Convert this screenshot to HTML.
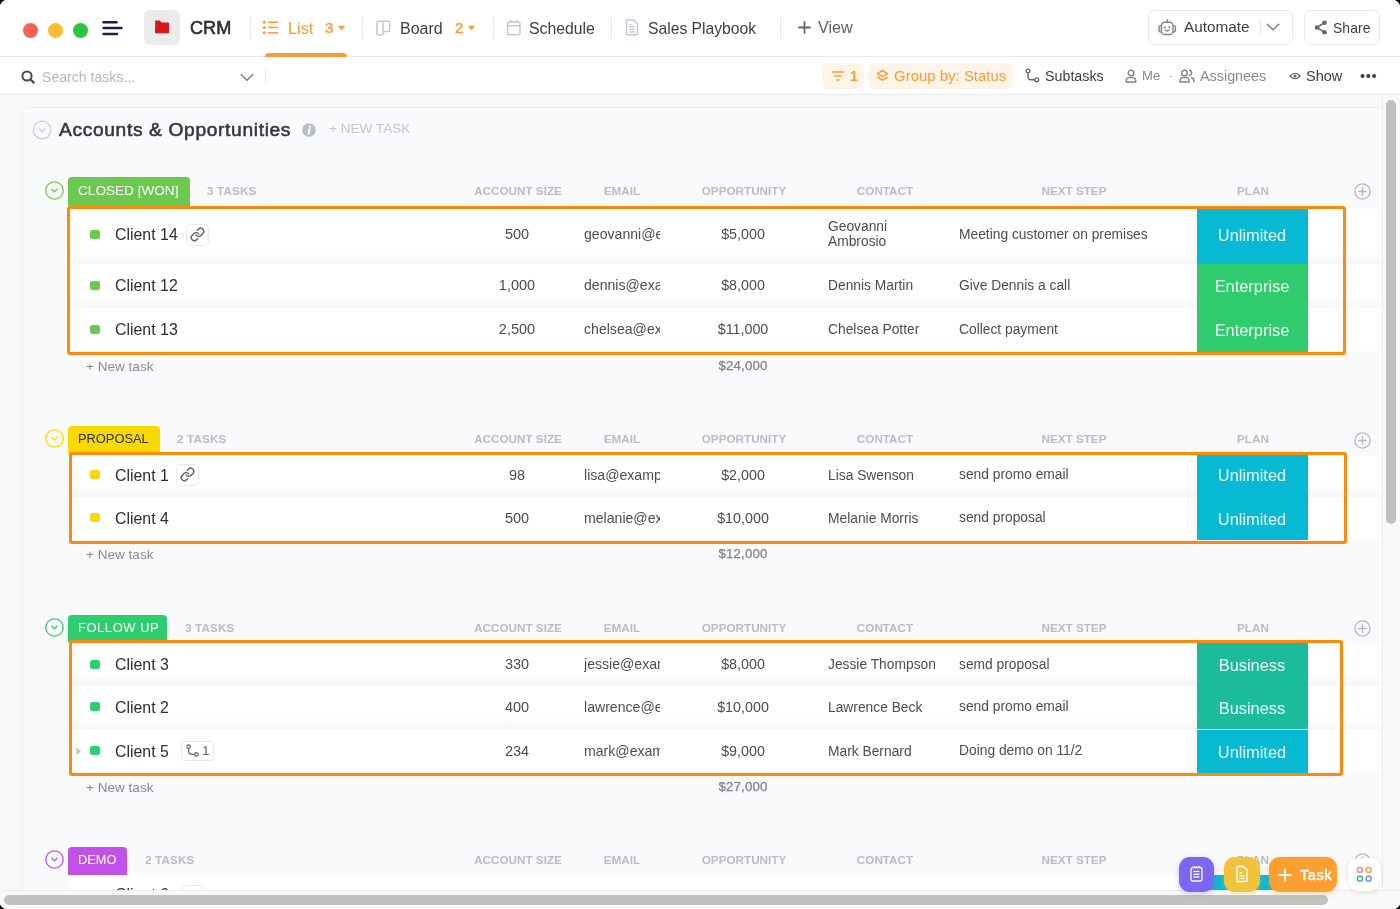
<!DOCTYPE html><html><head><meta charset="utf-8"><style>
html,body{margin:0;padding:0}
body{width:1400px;height:909px;overflow:hidden;background:#000;position:relative;font-family:"Liberation Sans", sans-serif}
#win{-webkit-font-smoothing:antialiased;position:absolute;left:0;top:0;width:1400px;height:909px;border-radius:7px;overflow:hidden;background:#fff}
.t{position:absolute;white-space:nowrap;will-change:transform}
.b{position:absolute}
</style></head><body><div id="win">
<div class="b" style="left:0px;top:95px;width:1400px;height:814px;background:#f8f8f9"></div>
<div class="b" style="left:22px;top:107px;width:1400px;height:850px;background:#f9fafb;border:1px solid #eeeff2;border-radius:7px"></div>
<div class="b" style="left:0px;top:0px;width:1400px;height:57px;background:#fff;border-bottom:1px solid #e8eaee;box-sizing:border-box"></div>
<div class="b" style="left:23.0px;top:22.5px;width:15px;height:15px;background:#fe5f57;border-radius:50%"></div>
<div class="b" style="left:48.0px;top:22.5px;width:15px;height:15px;background:#febc2e;border-radius:50%"></div>
<div class="b" style="left:73.0px;top:22.5px;width:15px;height:15px;background:#28c840;border-radius:50%"></div>
<svg class="b" style="left:101px;top:19px" width="24" height="18" viewBox="0 0 24 18"><g stroke="#1f2045" stroke-width="2.4" stroke-linecap="round"><line x1="2.5" y1="3.3" x2="15.5" y2="3.3"/><line x1="2.5" y1="9" x2="20.5" y2="9"/><line x1="2.5" y1="15" x2="16" y2="15"/></g></svg>
<div class="b" style="left:144px;top:10px;width:36px;height:35px;background:#ebebeb;border-radius:6px"></div>
<svg class="b" style="left:154px;top:20px" width="16" height="14" viewBox="0 0 16 14"><path d="M1.2 1.2 Q1.2 0.6 1.8 0.6 L5.8 0.6 L7.6 2.6 L14.2 2.6 Q15 2.6 15 3.4 L15 12.4 Q15 13.2 14.2 13.2 L1.8 13.2 Q1 13.2 1 12.4 Z" fill="#d6161c"/></svg>
<div class="t" style="left:189.5px;top:17.00px;font-size:18.1px;line-height:23px;color:#2b2e36;font-weight:normal;-webkit-text-stroke:0.55px #2b2e36">CRM</div>
<div class="b" style="left:250.0px;top:17px;width:1px;height:22px;background:#e6e8ec"></div>
<div class="b" style="left:362.0px;top:17px;width:1px;height:22px;background:#e6e8ec"></div>
<div class="b" style="left:492.7px;top:17px;width:1px;height:22px;background:#e6e8ec"></div>
<div class="b" style="left:610.9px;top:17px;width:1px;height:22px;background:#e6e8ec"></div>
<div class="b" style="left:779.5px;top:17px;width:1px;height:22px;background:#e6e8ec"></div>
<svg class="b" style="left:262px;top:20px" width="18" height="15" viewBox="0 0 18 15"><g fill="#fd9a34"><circle cx="2.3" cy="2.3" r="1.5"/><circle cx="2.3" cy="7.5" r="1.5"/><circle cx="2.3" cy="12.7" r="1.5"/></g><g stroke="#fd9a34" stroke-width="1.5" stroke-linecap="round"><line x1="6.5" y1="2.3" x2="15.5" y2="2.3"/><line x1="6.5" y1="7.5" x2="15.5" y2="7.5"/><line x1="6.5" y1="12.7" x2="15.5" y2="12.7"/></g></svg>
<div class="t" style="left:287.5px;top:18.00px;font-size:16.3px;line-height:20px;color:#fd9a34;font-weight:normal;">List</div>
<div class="t" style="left:324.5px;top:18.00px;font-size:15px;line-height:19px;color:#fd9a34;font-weight:normal;-webkit-text-stroke:0.4px #fd9a34">3</div>
<svg class="b" style="left:337px;top:25px" width="9" height="6" viewBox="0 0 9 6"><path d="M0.8 0.8 L8.2 0.8 L4.5 5.2 Z" fill="#fd9a34"/></svg>
<div class="b" style="left:264.7px;top:52.5px;width:82.3px;height:5px;background:#fd9a34;border-radius:4px 4px 0 0"></div>
<svg class="b" style="left:376px;top:20px" width="15" height="16" viewBox="0 0 15 16"><path d="M7 1.2 H2.6 Q1 1.2 1 2.8 V13.4 Q1 15 2.6 15 H5.4 Q7 15 7 13.4 V1.2 H12 Q13.6 1.2 13.6 2.8 V9.9 Q13.6 11.5 12 11.5 H7" fill="none" stroke="#c3c7cf" stroke-width="1.5" stroke-linejoin="round"/></svg>
<div class="t" style="left:399.8px;top:19.00px;font-size:16px;line-height:20px;color:#3a3d44;font-weight:normal;">Board</div>
<div class="t" style="left:454.8px;top:18.00px;font-size:15px;line-height:19px;color:#fd9a34;font-weight:normal;-webkit-text-stroke:0.4px #fd9a34">2</div>
<svg class="b" style="left:466.5px;top:25px" width="9" height="6" viewBox="0 0 9 6"><path d="M0.8 0.8 L8.2 0.8 L4.5 5.2 Z" fill="#fd9a34"/></svg>
<svg class="b" style="left:506px;top:19px" width="16" height="17" viewBox="0 0 16 17"><g fill="none" stroke="#c3c7cf" stroke-width="1.5" stroke-linejoin="round"><rect x="1.5" y="3" width="12.5" height="12.8" rx="2"/><line x1="1.5" y1="6.8" x2="14" y2="6.8"/><line x1="4.6" y1="1" x2="4.6" y2="3.5"/><line x1="10.9" y1="1" x2="10.9" y2="3.5"/></g></svg>
<div class="t" style="left:529.3px;top:19.00px;font-size:15.8px;line-height:20px;color:#3a3d44;font-weight:normal;">Schedule</div>
<svg class="b" style="left:625px;top:19px" width="14" height="17" viewBox="0 0 14 17"><g fill="none" stroke="#c3c7cf" stroke-width="1.4" stroke-linejoin="round"><path d="M1.5 2.2 Q1.5 1 2.7 1 H8.5 L12.5 5 V14.6 Q12.5 15.8 11.3 15.8 H2.7 Q1.5 15.8 1.5 14.6 Z"/><line x1="4.3" y1="8" x2="9.7" y2="8"/><line x1="4.3" y1="10.5" x2="9.7" y2="10.5"/><line x1="4.3" y1="13" x2="9.7" y2="13"/><line x1="4.3" y1="5.5" x2="6.5" y2="5.5"/></g></svg>
<div class="t" style="left:647.9px;top:19.00px;font-size:15.7px;line-height:20px;color:#3a3d44;font-weight:normal;">Sales Playbook</div>
<svg class="b" style="left:797.5px;top:21px" width="13" height="13" viewBox="0 0 13 13"><g stroke="#62656c" stroke-width="1.8" stroke-linecap="round"><line x1="6.5" y1="1" x2="6.5" y2="12"/><line x1="1" y1="6.5" x2="12" y2="6.5"/></g></svg>
<div class="t" style="left:817.9px;top:17.00px;font-size:16.2px;line-height:20px;color:#5d6067;font-weight:normal;">View</div>
<div class="b" style="left:1147.5px;top:10px;width:145px;height:35px;border:1px solid #e6e8ec;border-radius:7px;box-sizing:border-box;background:#fff"></div>
<svg class="b" style="left:1157px;top:18px" width="20" height="18" viewBox="0 0 20 18"><g fill="none" stroke="#80838a" stroke-width="1.4"><rect x="4.4" y="4.3" width="11.6" height="12.2" rx="3.6"/><path d="M4.4 7.6 H3.4 Q2 7.6 2 9 V12.6 Q2 14 3.4 14 H4.4"/><path d="M16 7.6 H17 Q18.4 7.6 18.4 9 V12.6 Q18.4 14 17 14 H16"/><line x1="10.2" y1="1.2" x2="10.2" y2="4.3"/></g><circle cx="7.8" cy="9.2" r="1.05" fill="#80838a"/><circle cx="12.6" cy="9.2" r="1.05" fill="#80838a"/><path d="M8.1 12.1 Q10.2 14 12.3 12.1" fill="none" stroke="#80838a" stroke-width="1.3" stroke-linecap="round"/></svg>
<div class="t" style="left:1184.2px;top:17.00px;font-size:15.3px;line-height:19px;color:#3a3d44;font-weight:normal;">Automate</div>
<div class="b" style="left:1260.3px;top:18.5px;width:1px;height:17.5px;background:#e6e8ec"></div>
<svg class="b" style="left:1266px;top:23px" width="14" height="8" viewBox="0 0 14 8"><path d="M1.2 1.2 L7 6.8 L12.8 1.2" fill="none" stroke="#7d8088" stroke-width="1.4" stroke-linecap="round" stroke-linejoin="round"/></svg>
<div class="b" style="left:1304px;top:10px;width:76px;height:35px;border:1px solid #e6e8ec;border-radius:7px;box-sizing:border-box;background:#fff"></div>
<svg class="b" style="left:1313.5px;top:20px" width="14" height="15" viewBox="0 0 14 15"><g fill="#62656c"><circle cx="10.5" cy="2.7" r="2.3"/><circle cx="3" cy="7.5" r="2.3"/><circle cx="10.5" cy="12.3" r="2.3"/></g><g stroke="#62656c" stroke-width="1.5"><line x1="10.5" y1="2.7" x2="3" y2="7.5"/><line x1="3" y1="7.5" x2="10.5" y2="12.3"/></g></svg>
<div class="t" style="left:1333.1px;top:20.00px;font-size:13.9px;line-height:17px;color:#3a3d44;font-weight:normal;letter-spacing:0.1px">Share</div>
<div class="b" style="left:0px;top:57px;width:1400px;height:38px;background:#fff;border-bottom:1px solid #e8eaee;box-sizing:border-box"></div>
<svg class="b" style="left:20.5px;top:70px" width="15" height="14" viewBox="0 0 15 14"><circle cx="6" cy="6" r="4.6" fill="none" stroke="#4a4d55" stroke-width="2"/><line x1="9.4" y1="9.4" x2="12.8" y2="12.6" stroke="#4a4d55" stroke-width="2.2" stroke-linecap="round"/></svg>
<div class="t" style="left:42px;top:68.00px;font-size:14.1px;line-height:18px;color:#b4b7bd;font-weight:normal;">Search tasks...</div>
<svg class="b" style="left:239.5px;top:72.5px" width="14" height="9" viewBox="0 0 14 9"><path d="M1.2 1.5 L7 7.3 L12.8 1.5" fill="none" stroke="#7d8088" stroke-width="1.5" stroke-linecap="round" stroke-linejoin="round"/></svg>
<div class="b" style="left:265.2px;top:68px;width:1px;height:16px;background:#e6e8ec"></div>
<div class="b" style="left:822.4px;top:63.2px;width:41.6px;height:26px;background:#fff4e8;border-radius:6px"></div>
<svg class="b" style="left:830.5px;top:70px" width="14" height="12" viewBox="0 0 14 12"><g stroke="#fd9a34" stroke-width="1.5" stroke-linecap="round"><line x1="1.5" y1="2" x2="12.5" y2="2"/><line x1="3.8" y1="6" x2="10.2" y2="6"/><line x1="6" y1="10" x2="8" y2="10"/></g></svg>
<div class="t" style="left:849.5px;top:67.00px;font-size:14px;line-height:18px;color:#fd9a34;font-weight:bold;">1</div>
<div class="b" style="left:868.3px;top:63.2px;width:144.8px;height:26px;background:#fff4e8;border-radius:6px"></div>
<svg class="b" style="left:876px;top:69px" width="13" height="14" viewBox="0 0 13 14"><g fill="none" stroke="#fd9a34" stroke-width="1.5" stroke-linejoin="round"><path d="M6.5 1.5 L11.5 4.6 L6.5 7.7 L1.5 4.6 Z"/><path d="M1.5 8 L6.5 11.2 L11.5 8"/></g></svg>
<div class="t" style="left:893.6px;top:66.00px;font-size:14.98px;line-height:19px;color:#fd9a34;font-weight:normal;">Group by: Status</div>
<svg class="b" style="left:1025px;top:68px" width="15" height="15" viewBox="0 0 15 15"><g fill="none" stroke="#62656c" stroke-width="1.4"><circle cx="3" cy="3" r="1.9"/><circle cx="11.8" cy="11.8" r="1.9"/><path d="M3 5 V8.5 Q3 11.8 6.3 11.8 H9.8"/></g></svg>
<div class="t" style="left:1045.3px;top:67.00px;font-size:14.27px;line-height:18px;color:#3a3d44;font-weight:normal;">Subtasks</div>
<svg class="b" style="left:1125px;top:69px" width="12" height="14" viewBox="0 0 12 14"><g fill="none" stroke="#7d8088" stroke-width="1.4"><circle cx="6" cy="4" r="2.8"/><path d="M1.3 13 V11.5 Q1.3 8.6 4.2 8.6 H7.8 Q10.7 8.6 10.7 11.5 V13 Z"/></g></svg>
<div class="t" style="left:1141.5px;top:68.00px;font-size:13.1px;line-height:16px;color:#878a91;font-weight:normal;">Me</div>
<div class="b" style="left:1168.5px;top:75.5px;width:4px;height:1.3px;background:#c9ccd2"></div>
<svg class="b" style="left:1178.5px;top:69px" width="16" height="14" viewBox="0 0 16 14"><g fill="none" stroke="#7d8088" stroke-width="1.4"><circle cx="5.5" cy="4" r="2.8"/><path d="M1 13 V11.5 Q1 8.6 3.9 8.6 H7.1 Q10 8.6 10 11.5 V13 Z"/><path d="M10 1.3 Q12.6 1.6 12.6 4 Q12.6 6.4 10 6.7"/><path d="M12 8.7 Q14.8 9 14.8 11.5 V13"/></g></svg>
<div class="t" style="left:1199.5px;top:67.00px;font-size:14.37px;line-height:18px;color:#878a91;font-weight:normal;">Assignees</div>
<svg class="b" style="left:1288.5px;top:71px" width="12" height="10" viewBox="0 0 12 10"><path d="M0.9 5 Q6 -0.5 11.1 5 Q6 10.5 0.9 5 Z" fill="none" stroke="#62656c" stroke-width="1.2"/><circle cx="6" cy="5" r="1.5" fill="#62656c"/></svg>
<div class="t" style="left:1305.7px;top:67.00px;font-size:14.51px;line-height:18px;color:#3a3d44;font-weight:normal;">Show</div>
<svg class="b" style="left:1359.5px;top:72.5px" width="17" height="6" viewBox="0 0 17 6"><g fill="#3a3d44"><circle cx="2.5" cy="3" r="2"/><circle cx="8.3" cy="3" r="2"/><circle cx="14.1" cy="3" r="2"/></g></svg>
<svg class="b" style="left:32px;top:120px" width="20" height="20" viewBox="0 0 20 20"><circle cx="10" cy="10" r="8.8" fill="none" stroke="#c8cbd1" stroke-width="1.2"/><path d="M7.3 9 L10 11.6 L12.7 9" fill="none" stroke="#c8cbd1" stroke-width="1.2" stroke-linecap="round"/></svg>
<div class="t" style="left:58.6px;top:118.00px;font-size:19.2px;line-height:24px;color:#33363d;font-weight:normal;letter-spacing:0.65px;-webkit-text-stroke:0.55px #33363d">Accounts &amp; Opportunities</div>
<svg class="b" style="left:301.5px;top:122.5px" width="14" height="14" viewBox="0 0 14 14"><circle cx="7" cy="7" r="6.8" fill="#b9bdc5"/><path d="M7.6 5.8 L6.6 10.8" stroke="#fff" stroke-width="1.9" stroke-linecap="round"/><circle cx="7.9" cy="3.6" r="1.1" fill="#fff"/></svg>
<div class="t" style="left:329px;top:120.00px;font-size:13.57px;line-height:17px;color:#c3c6cc;font-weight:normal;">+ NEW TASK</div>
<svg class="b" style="left:44.8px;top:180.70000000000002px" width="19" height="19" viewBox="0 0 19 19"><circle cx="9.5" cy="9.5" r="8.7" fill="none" stroke="#6bc950" stroke-width="1.3"/><path d="M6.9 8.3 L9.5 10.8 L12.1 8.3" fill="none" stroke="#6bc950" stroke-width="1.3" stroke-linecap="round" stroke-linejoin="round"/></svg>
<div class="b" style="left:67.7px;top:177.2px;width:121.89999999999999px;height:28.80000000000001px;background:#6bc950;border-radius:4px 4px 0 0"></div>
<div class="t" style="left:78.1px;top:182.00px;font-size:13.6px;line-height:17px;color:#fff;font-weight:normal;letter-spacing:0.0px">CLOSED [WON]</div>
<div class="t" style="left:207.3px;top:184.00px;font-size:11.6px;line-height:14px;color:#b9bcc3;font-weight:bold;letter-spacing:0.2px">3 TASKS</div>
<div class="t" style="left:418.30px;width:200px;text-align:center;top:183.00px;font-size:11.7px;line-height:15px;color:#b9bcc3;font-weight:bold;">ACCOUNT SIZE</div>
<div class="t" style="left:522.40px;width:200px;text-align:center;top:183.00px;font-size:11.7px;line-height:15px;color:#b9bcc3;font-weight:bold;">EMAIL</div>
<div class="t" style="left:644.10px;width:200px;text-align:center;top:183.00px;font-size:11.7px;line-height:15px;color:#b9bcc3;font-weight:bold;">OPPORTUNITY</div>
<div class="t" style="left:784.50px;width:200px;text-align:center;top:183.00px;font-size:11.7px;line-height:15px;color:#b9bcc3;font-weight:bold;">CONTACT</div>
<div class="t" style="left:974.00px;width:200px;text-align:center;top:183.00px;font-size:11.7px;line-height:15px;color:#b9bcc3;font-weight:bold;">NEXT STEP</div>
<div class="t" style="left:1153.40px;width:200px;text-align:center;top:183.00px;font-size:11.7px;line-height:15px;color:#b9bcc3;font-weight:bold;">PLAN</div>
<svg class="b" style="left:1354px;top:183.1px" width="17" height="17" viewBox="0 0 17 17"><circle cx="8.5" cy="8.5" r="7.6" fill="none" stroke="#b3b6bd" stroke-width="1.3"/><g stroke="#b3b6bd" stroke-width="1.3" stroke-linecap="round"><line x1="8.5" y1="4.7" x2="8.5" y2="12.3"/><line x1="4.7" y1="8.5" x2="12.3" y2="8.5"/></g></svg>
<div class="b" style="left:68px;top:209px;width:1314px;height:55.30000000000001px;background:linear-gradient(to bottom,#fff 0,#fff calc(100% - 11px),#f7f7f8 calc(100% - 1px),#f4f4f6 100%)"></div>
<div class="b" style="left:89.6px;top:229.8px;width:10.6px;height:9px;background:#6bc950;border-radius:2.5px"></div>
<div class="t" style="left:115.3px;top:225.00px;font-size:15.9px;line-height:20px;color:#2b2e36;font-weight:normal;">Client 14</div>
<div class="b" style="left:186.3px;top:223.9px;width:22.5px;height:21.8px;border:1px solid #e6e8ec;border-radius:5px;box-sizing:border-box;background:#fff"></div>
<svg class="b" style="left:189.9px;top:227.10000000000002px" width="15" height="15" viewBox="0 0 24 24"><g fill="none" stroke="#5d6067" stroke-width="2.3" stroke-linecap="round" stroke-linejoin="round"><path d="M10 13a5 5 0 0 0 7.54.54l3-3a5 5 0 0 0-7.07-7.07l-1.72 1.71"/><path d="M14 11a5 5 0 0 0-7.54-.54l-3 3a5 5 0 0 0 7.07 7.07l1.71-1.71"/></g></svg>
<div class="t" style="left:467.30px;width:100px;text-align:center;top:225.00px;font-size:14.5px;line-height:18px;color:#4a4d54;font-weight:normal;">500</div>
<div class="t" style="left:583.8px;top:225px;width:75.5px;overflow:hidden;font-size:14.1px;line-height:18px;color:#4a4d54">geovanni@example.com</div>
<div class="t" style="left:692.90px;width:100px;text-align:center;top:225.00px;font-size:14.3px;line-height:18px;color:#4a4d54;font-weight:normal;">$5,000</div>
<div class="t" style="left:828px;top:218.00px;font-size:13.8px;line-height:17px;color:#4a4d54;font-weight:normal;">Geovanni</div>
<div class="t" style="left:828px;top:233.00px;font-size:13.8px;line-height:17px;color:#4a4d54;font-weight:normal;">Ambrosio</div>
<div class="t" style="left:959px;top:226.00px;font-size:13.8px;line-height:17px;color:#4a4d54;font-weight:normal;">Meeting customer on premises</div>
<div class="b" style="left:1197px;top:209px;width:110.7px;height:56px;background:#08b9d4"></div>
<div class="t" style="left:1192.20px;width:120px;text-align:center;top:225.00px;font-size:16.4px;line-height:20px;color:rgba(255,255,255,0.93);font-weight:normal;">Unlimited</div>
<div class="b" style="left:68px;top:264.3px;width:1314px;height:42.89999999999998px;background:linear-gradient(to bottom,#fff 0,#fff calc(100% - 11px),#f7f7f8 calc(100% - 1px),#f4f4f6 100%)"></div>
<div class="b" style="left:89.6px;top:280.8px;width:10.6px;height:9px;background:#6bc950;border-radius:2.5px"></div>
<div class="t" style="left:115.3px;top:276.00px;font-size:15.9px;line-height:20px;color:#2b2e36;font-weight:normal;">Client 12</div>
<div class="t" style="left:467.30px;width:100px;text-align:center;top:276.00px;font-size:14.5px;line-height:18px;color:#4a4d54;font-weight:normal;">1,000</div>
<div class="t" style="left:583.8px;top:276px;width:75.5px;overflow:hidden;font-size:14.1px;line-height:18px;color:#4a4d54">dennis@example.com</div>
<div class="t" style="left:692.90px;width:100px;text-align:center;top:276.00px;font-size:14.3px;line-height:18px;color:#4a4d54;font-weight:normal;">$8,000</div>
<div class="t" style="left:828px;top:277.00px;font-size:13.8px;line-height:17px;color:#4a4d54;font-weight:normal;">Dennis Martin</div>
<div class="t" style="left:959px;top:277.00px;font-size:13.8px;line-height:17px;color:#4a4d54;font-weight:normal;">Give Dennis a call</div>
<div class="b" style="left:1197px;top:264px;width:110.7px;height:44px;background:#2fcc6e"></div>
<div class="t" style="left:1192.20px;width:120px;text-align:center;top:276.00px;font-size:16.4px;line-height:20px;color:rgba(255,255,255,0.93);font-weight:normal;">Enterprise</div>
<div class="b" style="left:68px;top:307.2px;width:1314px;height:44.0px;background:#fff"></div>
<div class="b" style="left:89.6px;top:324.6px;width:10.6px;height:9px;background:#6bc950;border-radius:2.5px"></div>
<div class="t" style="left:115.3px;top:320.00px;font-size:15.9px;line-height:20px;color:#2b2e36;font-weight:normal;">Client 13</div>
<div class="t" style="left:467.30px;width:100px;text-align:center;top:320.00px;font-size:14.5px;line-height:18px;color:#4a4d54;font-weight:normal;">2,500</div>
<div class="t" style="left:583.8px;top:320px;width:75.5px;overflow:hidden;font-size:14.1px;line-height:18px;color:#4a4d54">chelsea@example.com</div>
<div class="t" style="left:692.90px;width:100px;text-align:center;top:320.00px;font-size:14.3px;line-height:18px;color:#4a4d54;font-weight:normal;">$11,000</div>
<div class="t" style="left:828px;top:321.00px;font-size:13.8px;line-height:17px;color:#4a4d54;font-weight:normal;">Chelsea Potter</div>
<div class="t" style="left:959px;top:321.00px;font-size:13.8px;line-height:17px;color:#4a4d54;font-weight:normal;">Collect payment</div>
<div class="b" style="left:1197px;top:307px;width:110.7px;height:45px;background:#2fcc6e"></div>
<div class="t" style="left:1192.20px;width:120px;text-align:center;top:320.00px;font-size:16.4px;line-height:20px;color:rgba(255,255,255,0.93);font-weight:normal;">Enterprise</div>
<div class="b" style="left:67.4px;top:205.7px;width:1278.6999999999998px;height:149.2px;border:3.6px solid #fe8a0b;border-radius:3px;box-sizing:border-box"></div>
<div class="t" style="left:86.3px;top:358.00px;font-size:13.57px;line-height:17px;color:#878a91;font-weight:normal;">+ New task</div>
<div class="t" style="left:693.40px;width:100px;text-align:center;top:358.00px;font-size:13.2px;line-height:16px;color:#7f828a;font-weight:normal;letter-spacing:0.2px;-webkit-text-stroke:0.25px #7f828a">$24,000</div>
<svg class="b" style="left:44.8px;top:429.2px" width="19" height="19" viewBox="0 0 19 19"><circle cx="9.5" cy="9.5" r="8.7" fill="none" stroke="#f9d900" stroke-width="1.3"/><path d="M6.9 8.3 L9.5 10.8 L12.1 8.3" fill="none" stroke="#f9d900" stroke-width="1.3" stroke-linecap="round" stroke-linejoin="round"/></svg>
<div class="b" style="left:67.7px;top:425.8px;width:92.10000000000001px;height:27.19999999999999px;background:#f9d900;border-radius:4px 4px 0 0"></div>
<div class="t" style="left:78.1px;top:431.00px;font-size:12.85px;line-height:16px;color:#2b2e36;font-weight:normal;letter-spacing:0.0px">PROPOSAL</div>
<div class="t" style="left:176.8px;top:432.00px;font-size:11.6px;line-height:14px;color:#b9bcc3;font-weight:bold;letter-spacing:0.2px">2 TASKS</div>
<div class="t" style="left:418.30px;width:200px;text-align:center;top:431.00px;font-size:11.7px;line-height:15px;color:#b9bcc3;font-weight:bold;">ACCOUNT SIZE</div>
<div class="t" style="left:522.40px;width:200px;text-align:center;top:431.00px;font-size:11.7px;line-height:15px;color:#b9bcc3;font-weight:bold;">EMAIL</div>
<div class="t" style="left:644.10px;width:200px;text-align:center;top:431.00px;font-size:11.7px;line-height:15px;color:#b9bcc3;font-weight:bold;">OPPORTUNITY</div>
<div class="t" style="left:784.50px;width:200px;text-align:center;top:431.00px;font-size:11.7px;line-height:15px;color:#b9bcc3;font-weight:bold;">CONTACT</div>
<div class="t" style="left:974.00px;width:200px;text-align:center;top:431.00px;font-size:11.7px;line-height:15px;color:#b9bcc3;font-weight:bold;">NEXT STEP</div>
<div class="t" style="left:1153.40px;width:200px;text-align:center;top:431.00px;font-size:11.7px;line-height:15px;color:#b9bcc3;font-weight:bold;">PLAN</div>
<svg class="b" style="left:1354px;top:431.59999999999997px" width="17" height="17" viewBox="0 0 17 17"><circle cx="8.5" cy="8.5" r="7.6" fill="none" stroke="#b3b6bd" stroke-width="1.3"/><g stroke="#b3b6bd" stroke-width="1.3" stroke-linecap="round"><line x1="8.5" y1="4.7" x2="8.5" y2="12.3"/><line x1="4.7" y1="8.5" x2="12.3" y2="8.5"/></g></svg>
<div class="b" style="left:68px;top:455.8px;width:1314px;height:41.19999999999999px;background:linear-gradient(to bottom,#fff 0,#fff calc(100% - 11px),#f7f7f8 calc(100% - 1px),#f4f4f6 100%)"></div>
<div class="b" style="left:89.6px;top:470.0px;width:10.6px;height:9px;background:#f9d900;border-radius:2.5px"></div>
<div class="t" style="left:115.3px;top:466.00px;font-size:15.9px;line-height:20px;color:#2b2e36;font-weight:normal;">Client 1</div>
<div class="b" style="left:176.3px;top:464.1px;width:22.5px;height:21.8px;border:1px solid #e6e8ec;border-radius:5px;box-sizing:border-box;background:#fff"></div>
<svg class="b" style="left:179.9px;top:467.3px" width="15" height="15" viewBox="0 0 24 24"><g fill="none" stroke="#5d6067" stroke-width="2.3" stroke-linecap="round" stroke-linejoin="round"><path d="M10 13a5 5 0 0 0 7.54.54l3-3a5 5 0 0 0-7.07-7.07l-1.72 1.71"/><path d="M14 11a5 5 0 0 0-7.54-.54l-3 3a5 5 0 0 0 7.07 7.07l1.71-1.71"/></g></svg>
<div class="t" style="left:467.30px;width:100px;text-align:center;top:466.00px;font-size:14.5px;line-height:18px;color:#4a4d54;font-weight:normal;">98</div>
<div class="t" style="left:583.8px;top:466px;width:75.5px;overflow:hidden;font-size:14.1px;line-height:18px;color:#4a4d54">lisa@example.com</div>
<div class="t" style="left:692.90px;width:100px;text-align:center;top:466.00px;font-size:14.3px;line-height:18px;color:#4a4d54;font-weight:normal;">$2,000</div>
<div class="t" style="left:828px;top:467.00px;font-size:13.8px;line-height:17px;color:#4a4d54;font-weight:normal;">Lisa Swenson</div>
<div class="t" style="left:959px;top:466.00px;font-size:13.8px;line-height:17px;color:#4a4d54;font-weight:normal;">send promo email</div>
<div class="b" style="left:1197px;top:455px;width:110.7px;height:42px;background:#08b9d4"></div>
<div class="t" style="left:1192.20px;width:120px;text-align:center;top:465.00px;font-size:16.4px;line-height:20px;color:rgba(255,255,255,0.93);font-weight:normal;">Unlimited</div>
<div class="b" style="left:68px;top:497px;width:1314px;height:43px;background:#fff"></div>
<div class="b" style="left:89.6px;top:513.3px;width:10.6px;height:9px;background:#f9d900;border-radius:2.5px"></div>
<div class="t" style="left:115.3px;top:509.00px;font-size:15.9px;line-height:20px;color:#2b2e36;font-weight:normal;">Client 4</div>
<div class="t" style="left:467.30px;width:100px;text-align:center;top:509.00px;font-size:14.5px;line-height:18px;color:#4a4d54;font-weight:normal;">500</div>
<div class="t" style="left:583.8px;top:509px;width:75.5px;overflow:hidden;font-size:14.1px;line-height:18px;color:#4a4d54">melanie@example.com</div>
<div class="t" style="left:692.90px;width:100px;text-align:center;top:509.00px;font-size:14.3px;line-height:18px;color:#4a4d54;font-weight:normal;">$10,000</div>
<div class="t" style="left:828px;top:510.00px;font-size:13.8px;line-height:17px;color:#4a4d54;font-weight:normal;">Melanie Morris</div>
<div class="t" style="left:959px;top:509.00px;font-size:13.8px;line-height:17px;color:#4a4d54;font-weight:normal;">send proposal</div>
<div class="b" style="left:1197px;top:497px;width:110.7px;height:43px;background:#08b9d4"></div>
<div class="t" style="left:1192.20px;width:120px;text-align:center;top:509.00px;font-size:16.4px;line-height:20px;color:rgba(255,255,255,0.93);font-weight:normal;">Unlimited</div>
<div class="b" style="left:68.6px;top:452.1px;width:1278.8000000000002px;height:91.5px;border:3.6px solid #fe8a0b;border-radius:3px;box-sizing:border-box"></div>
<div class="t" style="left:86.3px;top:546.00px;font-size:13.57px;line-height:17px;color:#878a91;font-weight:normal;">+ New task</div>
<div class="t" style="left:693.40px;width:100px;text-align:center;top:546.00px;font-size:13.2px;line-height:16px;color:#7f828a;font-weight:normal;letter-spacing:0.2px;-webkit-text-stroke:0.25px #7f828a">$12,000</div>
<svg class="b" style="left:44.8px;top:617.5px" width="19" height="19" viewBox="0 0 19 19"><circle cx="9.5" cy="9.5" r="8.7" fill="none" stroke="#2ecd6f" stroke-width="1.3"/><path d="M6.9 8.3 L9.5 10.8 L12.1 8.3" fill="none" stroke="#2ecd6f" stroke-width="1.3" stroke-linecap="round" stroke-linejoin="round"/></svg>
<div class="b" style="left:67.7px;top:614.7px;width:99.49999999999999px;height:27.299999999999955px;background:#2ecd6f;border-radius:4px 4px 0 0"></div>
<div class="t" style="left:78.1px;top:620.00px;font-size:12.9px;line-height:16px;color:#fff;font-weight:normal;letter-spacing:0.6px">FOLLOW UP</div>
<div class="t" style="left:184.8px;top:621.00px;font-size:11.6px;line-height:14px;color:#b9bcc3;font-weight:bold;letter-spacing:0.2px">3 TASKS</div>
<div class="t" style="left:418.30px;width:200px;text-align:center;top:620.00px;font-size:11.7px;line-height:15px;color:#b9bcc3;font-weight:bold;">ACCOUNT SIZE</div>
<div class="t" style="left:522.40px;width:200px;text-align:center;top:620.00px;font-size:11.7px;line-height:15px;color:#b9bcc3;font-weight:bold;">EMAIL</div>
<div class="t" style="left:644.10px;width:200px;text-align:center;top:620.00px;font-size:11.7px;line-height:15px;color:#b9bcc3;font-weight:bold;">OPPORTUNITY</div>
<div class="t" style="left:784.50px;width:200px;text-align:center;top:620.00px;font-size:11.7px;line-height:15px;color:#b9bcc3;font-weight:bold;">CONTACT</div>
<div class="t" style="left:974.00px;width:200px;text-align:center;top:620.00px;font-size:11.7px;line-height:15px;color:#b9bcc3;font-weight:bold;">NEXT STEP</div>
<div class="t" style="left:1153.40px;width:200px;text-align:center;top:620.00px;font-size:11.7px;line-height:15px;color:#b9bcc3;font-weight:bold;">PLAN</div>
<svg class="b" style="left:1354px;top:619.9000000000001px" width="17" height="17" viewBox="0 0 17 17"><circle cx="8.5" cy="8.5" r="7.6" fill="none" stroke="#b3b6bd" stroke-width="1.3"/><g stroke="#b3b6bd" stroke-width="1.3" stroke-linecap="round"><line x1="8.5" y1="4.7" x2="8.5" y2="12.3"/><line x1="4.7" y1="8.5" x2="12.3" y2="8.5"/></g></svg>
<div class="b" style="left:68px;top:643.8px;width:1314px;height:41.700000000000045px;background:linear-gradient(to bottom,#fff 0,#fff calc(100% - 11px),#f7f7f8 calc(100% - 1px),#f4f4f6 100%)"></div>
<div class="b" style="left:89.6px;top:659.5px;width:10.6px;height:9px;background:#2ecd6f;border-radius:2.5px"></div>
<div class="t" style="left:115.3px;top:655.00px;font-size:15.9px;line-height:20px;color:#2b2e36;font-weight:normal;">Client 3</div>
<div class="t" style="left:467.30px;width:100px;text-align:center;top:655.00px;font-size:14.5px;line-height:18px;color:#4a4d54;font-weight:normal;">330</div>
<div class="t" style="left:583.8px;top:655px;width:75.5px;overflow:hidden;font-size:14.1px;line-height:18px;color:#4a4d54">jessie@example.com</div>
<div class="t" style="left:692.90px;width:100px;text-align:center;top:655.00px;font-size:14.3px;line-height:18px;color:#4a4d54;font-weight:normal;">$8,000</div>
<div class="t" style="left:828px;top:656.00px;font-size:13.8px;line-height:17px;color:#4a4d54;font-weight:normal;">Jessie Thompson</div>
<div class="t" style="left:959px;top:656.00px;font-size:13.8px;line-height:17px;color:#4a4d54;font-weight:normal;">semd proposal</div>
<div class="b" style="left:1197px;top:643px;width:110.7px;height:43px;background:#1bbc9b"></div>
<div class="t" style="left:1192.20px;width:120px;text-align:center;top:655.00px;font-size:16.4px;line-height:20px;color:rgba(255,255,255,0.93);font-weight:normal;">Business</div>
<div class="b" style="left:68px;top:685.5px;width:1314px;height:43.10000000000002px;background:linear-gradient(to bottom,#fff 0,#fff calc(100% - 11px),#f7f7f8 calc(100% - 1px),#f4f4f6 100%)"></div>
<div class="b" style="left:89.6px;top:702.4px;width:10.6px;height:9px;background:#2ecd6f;border-radius:2.5px"></div>
<div class="t" style="left:115.3px;top:698.00px;font-size:15.9px;line-height:20px;color:#2b2e36;font-weight:normal;">Client 2</div>
<div class="t" style="left:467.30px;width:100px;text-align:center;top:698.00px;font-size:14.5px;line-height:18px;color:#4a4d54;font-weight:normal;">400</div>
<div class="t" style="left:583.8px;top:698px;width:75.5px;overflow:hidden;font-size:14.1px;line-height:18px;color:#4a4d54">lawrence@example.com</div>
<div class="t" style="left:692.90px;width:100px;text-align:center;top:698.00px;font-size:14.3px;line-height:18px;color:#4a4d54;font-weight:normal;">$10,000</div>
<div class="t" style="left:828px;top:699.00px;font-size:13.8px;line-height:17px;color:#4a4d54;font-weight:normal;">Lawrence Beck</div>
<div class="t" style="left:959px;top:698.00px;font-size:13.8px;line-height:17px;color:#4a4d54;font-weight:normal;">send promo email</div>
<div class="b" style="left:1197px;top:685px;width:110.7px;height:44px;background:#1bbc9b"></div>
<div class="t" style="left:1192.20px;width:120px;text-align:center;top:698.00px;font-size:16.4px;line-height:20px;color:rgba(255,255,255,0.93);font-weight:normal;">Business</div>
<div class="b" style="left:68px;top:728.6px;width:1314px;height:43.69999999999993px;background:#fff"></div>
<div class="b" style="left:89.6px;top:746.4px;width:10.6px;height:9px;background:#2ecd6f;border-radius:2.5px"></div>
<div class="t" style="left:115.3px;top:742.00px;font-size:15.9px;line-height:20px;color:#2b2e36;font-weight:normal;">Client 5</div>
<div class="b" style="left:180.6px;top:740.9px;width:33.2px;height:20.5px;border:1px solid #e8eaee;border-radius:4px;box-sizing:border-box;background:#fff"></div>
<svg class="b" style="left:185.6px;top:744.4px" width="13" height="13" viewBox="0 0 13 13"><g fill="none" stroke="#62656c" stroke-width="1.2"><circle cx="2.6" cy="2.6" r="1.7"/><circle cx="10.4" cy="10.4" r="1.7"/><path d="M2.6 4.3 V7.3 Q2.6 10.4 5.7 10.4 H8.7"/></g></svg>
<div class="t" style="left:202.1px;top:742.00px;font-size:13.5px;line-height:17px;color:#62656c;font-weight:normal;">1</div>
<svg class="b" style="left:76px;top:746.6px" width="6" height="9" viewBox="0 0 6 9"><path d="M0.5 0.5 L5 4.3 L0.5 8.1 Z" fill="#bfc2c8"/></svg>
<div class="t" style="left:467.30px;width:100px;text-align:center;top:742.00px;font-size:14.5px;line-height:18px;color:#4a4d54;font-weight:normal;">234</div>
<div class="t" style="left:583.8px;top:742px;width:75.5px;overflow:hidden;font-size:14.1px;line-height:18px;color:#4a4d54">mark@example.com</div>
<div class="t" style="left:692.90px;width:100px;text-align:center;top:742.00px;font-size:14.3px;line-height:18px;color:#4a4d54;font-weight:normal;">$9,000</div>
<div class="t" style="left:828px;top:743.00px;font-size:13.8px;line-height:17px;color:#4a4d54;font-weight:normal;">Mark Bernard</div>
<div class="t" style="left:959px;top:742.00px;font-size:13.8px;line-height:17px;color:#4a4d54;font-weight:normal;">Doing demo on 11/2</div>
<div class="b" style="left:1197px;top:729.8px;width:110.7px;height:43.200000000000045px;background:#08b9d4"></div>
<div class="t" style="left:1192.20px;width:120px;text-align:center;top:742.00px;font-size:16.4px;line-height:20px;color:rgba(255,255,255,0.93);font-weight:normal;">Unlimited</div>
<div class="b" style="left:69px;top:640.3px;width:1274.2px;height:135.80000000000007px;border:3.6px solid #fe8a0b;border-radius:3px;box-sizing:border-box"></div>
<div class="t" style="left:86.3px;top:779.00px;font-size:13.57px;line-height:17px;color:#878a91;font-weight:normal;">+ New task</div>
<div class="t" style="left:693.40px;width:100px;text-align:center;top:779.00px;font-size:13.2px;line-height:16px;color:#7f828a;font-weight:normal;letter-spacing:0.2px;-webkit-text-stroke:0.25px #7f828a">$27,000</div>
<svg class="b" style="left:44.8px;top:850.0999999999999px" width="19" height="19" viewBox="0 0 19 19"><circle cx="9.5" cy="9.5" r="8.7" fill="none" stroke="#c151e8" stroke-width="1.3"/><path d="M6.9 8.3 L9.5 10.8 L12.1 8.3" fill="none" stroke="#c151e8" stroke-width="1.3" stroke-linecap="round" stroke-linejoin="round"/></svg>
<div class="b" style="left:67.7px;top:847.1px;width:59.2px;height:28.299999999999955px;background:#c151e8;border-radius:4px 4px 0 0"></div>
<div class="t" style="left:78.1px;top:852.00px;font-size:12.8px;line-height:16px;color:#fff;font-weight:normal;letter-spacing:0.0px">DEMO</div>
<div class="t" style="left:144.6px;top:853.00px;font-size:11.6px;line-height:14px;color:#b9bcc3;font-weight:bold;letter-spacing:0.2px">2 TASKS</div>
<div class="t" style="left:418.30px;width:200px;text-align:center;top:852.00px;font-size:11.7px;line-height:15px;color:#b9bcc3;font-weight:bold;">ACCOUNT SIZE</div>
<div class="t" style="left:522.40px;width:200px;text-align:center;top:852.00px;font-size:11.7px;line-height:15px;color:#b9bcc3;font-weight:bold;">EMAIL</div>
<div class="t" style="left:644.10px;width:200px;text-align:center;top:852.00px;font-size:11.7px;line-height:15px;color:#b9bcc3;font-weight:bold;">OPPORTUNITY</div>
<div class="t" style="left:784.50px;width:200px;text-align:center;top:852.00px;font-size:11.7px;line-height:15px;color:#b9bcc3;font-weight:bold;">CONTACT</div>
<div class="t" style="left:974.00px;width:200px;text-align:center;top:852.00px;font-size:11.7px;line-height:15px;color:#b9bcc3;font-weight:bold;">NEXT STEP</div>
<div class="t" style="left:1153.40px;width:200px;text-align:center;top:852.00px;font-size:11.7px;line-height:15px;color:#b9bcc3;font-weight:bold;">PLAN</div>
<svg class="b" style="left:1354px;top:852.5px" width="17" height="17" viewBox="0 0 17 17"><circle cx="8.5" cy="8.5" r="7.6" fill="none" stroke="#b3b6bd" stroke-width="1.3"/><g stroke="#b3b6bd" stroke-width="1.3" stroke-linecap="round"><line x1="8.5" y1="4.7" x2="8.5" y2="12.3"/><line x1="4.7" y1="8.5" x2="12.3" y2="8.5"/></g></svg>
<div class="b" style="left:67.5px;top:875.4px;width:1315px;height:40px;background:#fff"></div>
<div class="b" style="left:1197px;top:875.4px;width:110.7px;height:40px;background:#08b9d4"></div>
<div class="t" style="left:115.3px;top:885.00px;font-size:15.9px;line-height:20px;color:#2b2e36;font-weight:normal;">Client 6</div>
<div class="b" style="left:181.5px;top:885.2px;width:21px;height:21.2px;border:1px solid #e8eaee;border-radius:4px;box-sizing:border-box;background:#fff"></div>
<div class="b" style="left:1382px;top:95px;width:18px;height:795px;background:#f9f9f9;border-left:1px solid #ececec;box-sizing:border-box"></div>
<div class="b" style="left:1386.4px;top:100px;width:9.7px;height:424px;background:#c1c1c1;border-radius:5px"></div>
<div class="b" style="left:0px;top:889.5px;width:1400px;height:20px;background:#f9f9f9;border-top:1px solid #ececec;box-sizing:border-box"></div>
<div class="b" style="left:4px;top:895.3px;width:1324px;height:9.8px;background:#c1c1c1;border-radius:5px"></div>
<div class="b" style="left:1178.6px;top:856.6px;width:35.6px;height:35.7px;background:#7b68ee;border-radius:11px;box-shadow:0 2px 6px rgba(123,104,238,.35)"></div>
<svg class="b" style="left:1188px;top:865px" width="17" height="18" viewBox="0 0 17 18"><g fill="none" stroke="#fff" stroke-width="1.3"><rect x="3" y="2.5" width="11" height="13.5" rx="2"/><line x1="5.5" y1="6.5" x2="11.5" y2="6.5"/><line x1="5.5" y1="9.3" x2="11.5" y2="9.3"/><line x1="5.5" y1="12" x2="11.5" y2="12"/></g><g stroke="#fff" stroke-width="1.1"><line x1="6" y1="1" x2="6" y2="3"/><line x1="8.5" y1="1" x2="8.5" y2="3"/><line x1="11" y1="1" x2="11" y2="3"/></g></svg>
<div class="b" style="left:1224px;top:856.6px;width:35.5px;height:35.7px;background:#f0c23e;border-radius:11px;box-shadow:0 2px 6px rgba(240,194,62,.35)"></div>
<svg class="b" style="left:1233.5px;top:865px" width="16" height="18" viewBox="0 0 16 18"><g fill="none" stroke="#fff" stroke-width="1.3" stroke-linejoin="round"><path d="M3 2.5 Q3 1.5 4 1.5 H9.5 L13 5 V15.5 Q13 16.5 12 16.5 H4 Q3 16.5 3 15.5 Z"/><line x1="5.5" y1="8" x2="8" y2="8"/><line x1="5.5" y1="10.7" x2="10.5" y2="10.7"/><line x1="5.5" y1="13.3" x2="10.5" y2="13.3"/></g></svg>
<div class="b" style="left:1268.8px;top:856.6px;width:68.3px;height:35.7px;background:#fd9f30;border-radius:11px;box-shadow:0 2px 6px rgba(253,159,48,.35)"></div>
<svg class="b" style="left:1277.5px;top:867.5px" width="14" height="14" viewBox="0 0 14 14"><g stroke="#fff" stroke-width="1.8" stroke-linecap="round"><line x1="7" y1="1.2" x2="7" y2="12.8"/><line x1="1.2" y1="7" x2="12.8" y2="7"/></g></svg>
<div class="t" style="left:1299.5px;top:866.00px;font-size:14.5px;line-height:18px;color:#fff;font-weight:normal;letter-spacing:0.6px;-webkit-text-stroke:0.5px #fff">Task</div>
<div class="b" style="left:1348.2px;top:857.5px;width:33px;height:33.5px;background:#fff;border-radius:11px;box-shadow:0 1px 5px rgba(0,0,0,.12)"></div>
<svg class="b" style="left:1356px;top:866px" width="17" height="17" viewBox="0 0 17 17"><g fill="none" stroke-width="1.6"><rect x="1.5" y="1.5" width="4.8" height="4.8" rx="1.5" stroke="#ee82b2"/><rect x="10.2" y="1.5" width="4.8" height="4.8" rx="1.5" stroke="#f6a04d"/><rect x="1.5" y="10.2" width="4.8" height="4.8" rx="1.5" stroke="#3db37e"/><rect x="10.2" y="10.2" width="4.8" height="4.8" rx="1.5" stroke="#7b8cf0"/></g></svg>
</div></body></html>
